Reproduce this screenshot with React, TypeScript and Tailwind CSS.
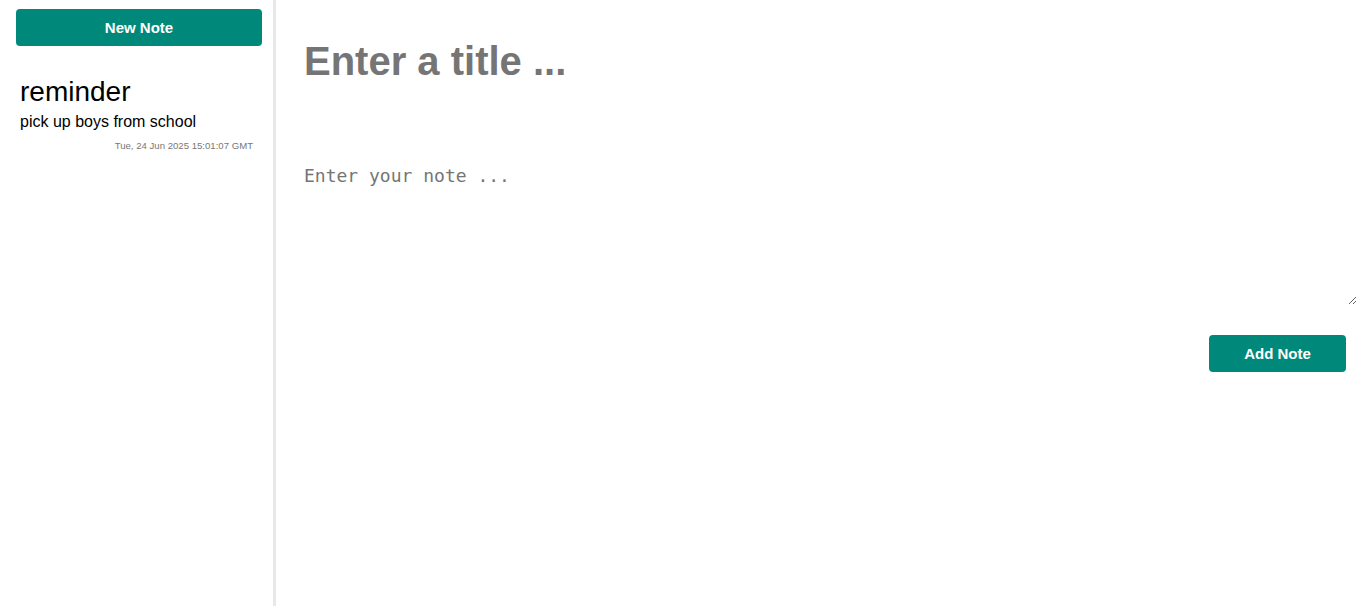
import React from "react";

export default function App() {
  return (
    <div className="flex h-[606px] w-full bg-white" style={{ fontFamily: '"Liberation Sans", Arial, sans-serif' }}>
      <aside className="w-[276px] shrink-0 border-r-[3px] border-[#e8e8e8] flex flex-col">
        <button className="mt-[9px] ml-[16px] w-[246px] h-[37px] pt-[1px] rounded-[4px] bg-[#00897b] text-white font-bold text-[15px]">
          New Note
        </button>
        <div className="mt-[30px] pl-[20px] pr-[20px] flex flex-col">
          <div className="text-[28px] leading-[32px] text-black">reminder</div>
          <div className="mt-[4px] text-[16px] leading-[20px] text-black">pick up boys from school</div>
          <div className="text-[9.6px] leading-[12px] text-[#777777] text-right mt-[8px]">Tue, 24 Jun 2025 15:01:07 GMT</div>
        </div>
      </aside>
      <main className="flex-1 flex flex-col pl-[28px] pr-[4px]">
        <input
          placeholder="Enter a title ..."
          className="mt-[37px] h-[48px] w-full outline-none border-0 p-0 text-[40px] font-bold placeholder:text-[#757575] text-black bg-transparent"
        />
        <textarea
          placeholder="Enter your note ..."
          className="mt-[77px] h-[143px] w-full outline-none border-0 p-0 text-[18px] placeholder:text-[#757575] bg-transparent"
          style={{ fontFamily: '"DejaVu Sans Mono", monospace' }}
        />
        <div className="flex justify-end mt-[30px] pr-[11px]">
          <button className="w-[137px] h-[37px] pt-[1px] rounded-[4px] bg-[#00897b] text-white font-bold text-[15px]">
            Add Note
          </button>
        </div>
      </main>
    </div>
  );
}
